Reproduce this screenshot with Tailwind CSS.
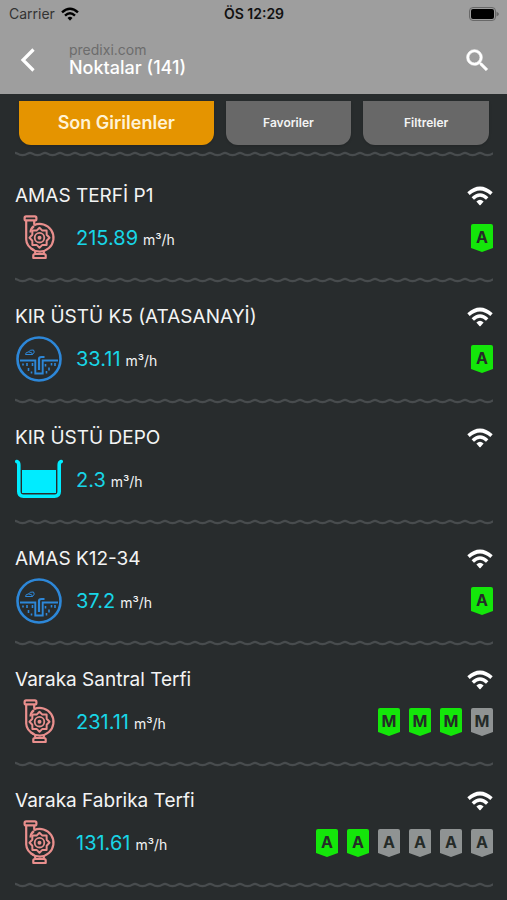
<!DOCTYPE html>
<html lang="tr">
<head>
<meta charset="utf-8">
<meta name="viewport" content="width=device-width, initial-scale=1">
<title>Noktalar</title>
<script src="https://cdn.jsdelivr.net/npm/@tailwindcss/browser@4"></script>
</head>
<body class="min-h-screen overflow-x-hidden bg-[#282c2d] font-['Inter','Liberation_Sans',sans-serif] text-[#f3f4f4]">

<svg class="absolute h-0 w-0" aria-hidden="true">
  <defs>
    <pattern id="wave-tile" width="15" height="6" patternUnits="userSpaceOnUse">
      <path d="M-2 2.2 Q0 1.4 2 2.4 Q7.5 6 13 2.4 Q15 1.4 17 2.4" fill="none" stroke="#484c4e" stroke-width="2.2"/>
    </pattern>
    <symbol id="wave"><rect width="100%" height="6" fill="url(#wave-tile)"/></symbol>
    <symbol id="wifi" viewBox="0 0 26 20">
      <g fill="none" stroke="currentColor">
        <path d="M1.500 7.600Q13 -2.600 24.500 7.600" stroke-width="3.600"/>
        <path d="M5.800 12.400Q13 5.600 20.200 12.400" stroke-width="3.500"/>
      </g>
      <path d="M9.400 15.600Q13 12 16.600 15.600L13.600 19Q13 19.600 12.400 19Z" fill="currentColor"/>
    </symbol>
    <symbol id="pump" viewBox="0 0 48 48">
      <g fill="none" stroke="#e98f8d" stroke-width="2.200" stroke-linejoin="round">
        <rect x="9.600" y="2.400" width="11.800" height="4" rx="1.500"/>
        <path d="M11.200 6.500V25.500Q11.500 32.500 19 36.200M19.200 6.500V10.800M15.500 18.500Q15.600 14.500 19 12"/>
        <path d="M19 11.200A13.800 13.800 0 1 1 16 34.500"/>
        <path d="M24.500 13.800 27.400 16.600 31.600 16.500 31.700 20.700 34.500 23.700 31.700 26.700 31.600 30.900 27.400 30.900 24.500 33.700 21.600 30.900 17.400 30.900 17.300 26.700 14.500 23.700 17.300 20.700 17.400 16.500 21.600 16.600Z" stroke-width="2"/>
        <circle cx="24.500" cy="23.700" r="4.800" stroke-width="1.800"/>
        <path d="M20.200 36.500V39.500M28.800 36.500V39.500M18.300 44V41.500Q18.300 40 19.800 40H29.200Q30.700 40 30.700 41.500V44Z"/>
      </g>
      <circle cx="24.500" cy="23.700" r="2" fill="#e98f8d"/>
    </symbol>
    <symbol id="well" viewBox="0 0 48 48">
      <g fill="none" stroke="#2d87d8">
        <circle cx="24" cy="24" r="21.500" stroke-width="2.600"/>
        <path d="M5 25.500H20.300V38.500H27.700V25.500H43" stroke-width="1.900"/>
        <path d="M24 35V24Q24 22 26.500 22H29.500" stroke-width="2.200"/>
        <path d="M8 28.500v2M12 28v3M13.500 33v3M17.500 28v3M16.500 36.500v2M30.500 29v2.500M34 32.500v3M36.500 28v2.500M31.500 36v2.500M40 28v3" stroke-width="1.600"/>
        <path d="M10.500 19.500Q10.500 17 13.500 17Q14.500 14.500 18.500 15Q20.500 17 17.500 19.500ZM13.500 17Q17.500 17 17.500 19.500" stroke-width="1"/>
      </g>
    </symbol>
    <symbol id="tank" viewBox="0 0 48 48">
      <path d="M1.800 5.500Q3.800 6 3.800 9V35.500Q3.800 40.200 8.500 40.200H39.500Q44.200 40.200 44.200 35.500V9Q44.200 6 46.200 5.500" fill="none" stroke="#00ecff" stroke-width="3.600" stroke-linecap="round"/>
      <path d="M7 14H41V37H7Z" fill="#00ecff"/>
    </symbol>
  </defs>
</svg>

<header class="bg-[#9e9e9e]">
  <div class="grid h-7 grid-cols-3 items-center pr-2 pl-[9px] text-sm leading-5 text-[#111]">
    <div class="flex items-center gap-1.5 text-[#333]">
      <span>Carrier</span>
      <svg class="h-3.5 w-[18px] text-black" role="img" aria-label="Wi-Fi"><use href="#wifi"/></svg>
    </div>
    <time class="text-center font-semibold">ÖS 12:29</time>
    <svg class="h-3.5 w-[30px] justify-self-end" viewBox="0 0 30 14" role="img" aria-label="Pil">
      <rect x="0.500" y="0.500" width="26" height="13" rx="3.500" fill="none" stroke="#686868"/>
      <rect x="2" y="2" width="23" height="10" rx="2" fill="#000"/>
      <path d="M27.500 4.500Q30 6 30 7T27.500 9.500Z" fill="#686868"/>
    </svg>
  </div>
  <div class="flex h-[66px] items-center pr-[15px] pb-0.5 pl-4">
    <button type="button" aria-label="Geri" class="mr-[29px] text-white">
      <svg class="h-6 w-6" viewBox="0 0 24 24"><path d="M17.500 1.500 7 12 17.500 22.500" fill="none" stroke="currentColor" stroke-width="3.200"/></svg>
    </button>
    <div class="flex-1">
      <p class="text-sm leading-4 text-[#6c6c6c]">predixi.com</p>
      <h1 class="text-lg leading-5 font-medium text-white">Noktalar (141)</h1>
    </div>
    <button type="button" aria-label="Ara" class="text-white">
      <svg class="h-[29px] w-[29px]" viewBox="0 0 24 24" fill="currentColor" stroke="currentColor" stroke-width="0.500"><path d="M15.500 14h-.790l-.280-.270A6.470 6.470 0 0 0 16 9.500 6.500 6.500 0 1 0 9.500 16c1.610 0 3.090-.590 4.230-1.570l.270.280v.790l5 4.990L20.490 19l-4.990-5zm-6 0C7.010 14 5 11.990 5 9.500S7.010 5 9.500 5 14 7.010 14 9.500 11.990 14 9.500 14z"/></svg>
    </button>
  </div>
</header>

<main class="pt-[7px] pr-3.5 pl-[15px]">
  <nav class="grid grid-cols-[195fr_126fr_126fr] gap-3 px-1 text-xs font-semibold">
    <button type="button" aria-pressed="true" class="h-11 rounded-b-xl bg-[#e59400] text-lg font-semibold text-[#fff3d6] shadow">Son Girilenler</button>
    <button type="button" class="h-11 rounded-b-xl bg-[#686868] shadow">Favoriler</button>
    <button type="button" class="h-11 rounded-b-xl bg-[#686868] shadow">Filtreler</button>
  </nav>
  <svg class="mt-1.5 h-1.5 w-full" aria-hidden="true"><use href="#wave"/></svg>

  <ul id="points" class="pt-[5px]"></ul>
</main>

<template id="point">
  <li class="pt-5">
    <div class="flex h-7 items-center justify-between">
      <h2 data-name class="text-[19px] leading-7"></h2>
      <svg class="h-5 w-[26px] text-white" role="img" aria-label="Bağlı"><use href="#wifi"/></svg>
    </div>
    <div class="mt-1 mb-[15px] flex h-12 items-center">
      <svg class="h-12 w-12" aria-hidden="true"><use data-icon/></svg>
      <p class="ml-[13px] flex flex-1 items-baseline gap-[5px] pt-0.5 text-sm leading-7"><span data-value class="text-[20px] text-[#18d5e6]"></span><span>m³/h</span></p>
      <div data-badges class="flex gap-[9px]"></div>
    </div>
    <svg class="h-1.5 w-full" aria-hidden="true"><use href="#wave"/></svg>
  </li>
</template>

<script>
  const points = [
    { name: 'AMAS TERFİ P1', icon: 'pump', value: '215.89', letter: 'A', on: 1, total: 1 },
    { name: 'KIR ÜSTÜ K5 (ATASANAYİ)', icon: 'well', value: '33.11', letter: 'A', on: 1, total: 1 },
    { name: 'KIR ÜSTÜ DEPO', icon: 'tank', value: '2.3', letter: '', on: 0, total: 0 },
    { name: 'AMAS K12-34', icon: 'well', value: '37.2', letter: 'A', on: 1, total: 1 },
    { name: 'Varaka Santral Terfi', icon: 'pump', value: '231.11', letter: 'M', on: 3, total: 4 },
    { name: 'Varaka Fabrika Terfi', icon: 'pump', value: '131.61', letter: 'A', on: 2, total: 6 }
  ];
  const badge = 'flex h-7 w-[22px] items-center justify-center rounded-t-xs pb-0.5 text-base font-bold text-[#252b28] [clip-path:polygon(0_0,100%_0,100%_86%,50%_100%,0_86%)]';
  const list = document.getElementById('points');
  const template = document.getElementById('point');
  for (const p of points) {
    const row = template.content.cloneNode(true);
    row.querySelector('[data-name]').textContent = p.name;
    row.querySelector('[data-value]').textContent = p.value;
    row.querySelector('[data-icon]').setAttribute('href', '#' + p.icon);
    const box = row.querySelector('[data-badges]');
    for (let i = 0; i < p.total; i++) {
      const b = document.createElement('span');
      b.className = badge + (i < p.on ? ' bg-[#14e60a]' : ' bg-[#8f9393]');
      b.textContent = p.letter;
      box.append(b);
    }
    list.append(row);
  }
</script>
</body>
</html>
